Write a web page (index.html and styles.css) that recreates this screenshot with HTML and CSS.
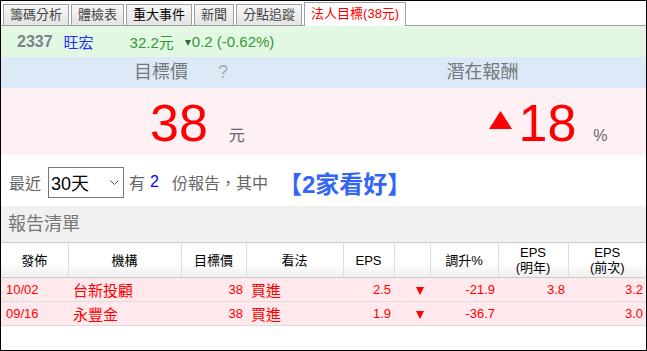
FILE: index.html
```html
<!DOCTYPE html>
<html>
<head>
    <meta charset="utf-8">
    <link rel="stylesheet" href="styles.css">
</head>
<body>
    <div class="frame">
        <div class="tabs">
            <div class="tab">籌碼分析</div>
            <div class="tab">體檢表</div>
            <div class="tab hover">重大事件</div>
            <div class="tab">新聞</div>
            <div class="tab">分點追蹤</div>
            <div class="tab active">法人目標(38元)</div>
        </div>

        <div class="quote">
            <span class="code">2337</span>
            <span class="name">旺宏</span>
            <span class="price">32.2元</span>
            <span class="chg"><svg class="down-sm" width="6" height="6" viewBox="0 0 6 6"><polygon points="0,0 6,0 3,6" fill="#2e6b2e"/></svg>0.2 (-0.62%)</span>
        </div>

        <div class="target-head">
            <div class="half left"><span>目標價</span><span class="help">?</span></div>
            <div class="half right">潛在報酬</div>
        </div>

        <div class="target-body">
            <div class="half left"><span class="big">38</span><span class="unit">元</span></div>
            <div class="half right"><span class="big"><svg class="up" width="23" height="18" viewBox="0 0 23 18"><polygon points="11.5,0 23,18 0,18" fill="#ff0000"/></svg>18</span><span class="unit">%</span></div>
        </div>

        <div class="summary">
            <span>最近</span>
            <div class="select">
                <span>30天</span>
                <svg width="9" height="5" viewBox="0 0 9 5"><polyline points="0.5,0.5 4.5,4.5 8.5,0.5" fill="none" stroke="#555" stroke-width="1"/></svg>
            </div>
            <span class="has">有</span>
            <span class="count">2</span>
            <span class="rest">份報告，其中</span>
            <span class="bull">【2家看好】</span>
        </div>

        <div class="list-title">報告清單</div>

        <table class="reports">
            <colgroup>
                <col style="width:67px">
                <col style="width:113px">
                <col style="width:65px">
                <col style="width:97px">
                <col style="width:51px">
                <col style="width:36px">
                <col style="width:68px">
                <col style="width:70px">
                <col style="width:78px">
            </colgroup>
            <thead>
                <tr>
                    <th>發佈</th>
                    <th>機構</th>
                    <th>目標價</th>
                    <th>看法</th>
                    <th>EPS</th>
                    <th></th>
                    <th>調升%</th>
                    <th>EPS<br>(明年)</th>
                    <th>EPS<br>(前次)</th>
                </tr>
            </thead>
            <tbody>
                <tr>
                    <td class="date">10/02</td>
                    <td class="org">台新投顧</td>
                    <td class="num">38</td>
                    <td class="view">買進</td>
                    <td class="num">2.5</td>
                    <td class="arrow"><svg width="8" height="8" viewBox="0 0 8 8"><polygon points="0,0 8,0 4,8" fill="#ff0000"/></svg></td>
                    <td class="num">-21.9</td>
                    <td class="num">3.8</td>
                    <td class="num">3.2</td>
                </tr>
                <tr>
                    <td class="date">09/16</td>
                    <td class="org">永豐金</td>
                    <td class="num">38</td>
                    <td class="view">買進</td>
                    <td class="num">1.9</td>
                    <td class="arrow"><svg width="8" height="8" viewBox="0 0 8 8"><polygon points="0,0 8,0 4,8" fill="#ff0000"/></svg></td>
                    <td class="num">-36.7</td>
                    <td class="num"></td>
                    <td class="num">3.0</td>
                </tr>
            </tbody>
        </table>
    </div>
</body>
</html>
```

FILE: styles.css
```css
body {
    margin: 0;
    font-family: "Liberation Sans", "Noto Sans CJK TC", sans-serif;
    background: #fff;
}

.frame {
    width: 645px;
    height: 349px;
    border: 1px solid #000;
    overflow: hidden;
}

/* tab strip */
.tabs {
    display: flex;
    align-items: flex-end;
    gap: 2px;
    height: 24px;
    padding-left: 2px;
    border-bottom: 1px solid #a0a0a0;
}

.tab {
    height: 20px;
    line-height: 20px;
    padding: 0 6px;
    border: 1px solid #a0a0a0;
    border-bottom: none;
    background: linear-gradient(#f7f7f7, #e3e3e3);
    font-size: 13px;
    color: #444;
}

.tab.hover { color: #000; }

.tab.active {
    height: 23px;
    line-height: 22px;
    margin-bottom: -1px;
    background: #fff;
    color: #ff0000;
}

/* quote bar */
.quote {
    display: flex;
    align-items: center;
    height: 31px;
    padding-left: 16px;
    background: #e2f8e2;
    font-size: 15px;
}

.code { color: #7a8290; font-weight: bold; font-size: 16px; margin-right: 11px; }
.name { color: #1a2ff0; margin-right: 36px; }
.price { color: #339933; margin-right: 11px; }
.chg { color: #339933; display: flex; align-items: center; }
.down-sm { margin-right: 1px; margin-top: 2px; }

/* target price */
.target-head {
    display: flex;
    height: 31px;
    background: #dceaf8;
    font-size: 18px;
    line-height: 31px;
    color: #777;
}

.half {
    width: 50%;
    box-sizing: border-box;
}

.target-head .left { padding-left: 133px; }
.target-head .right { padding-left: 123px; }
.help { color: #aaa; margin-left: 30px; }

.target-body {
    display: flex;
    height: 67px;
    background: #fff0f4;
}

.target-body .half {
    display: flex;
    align-items: baseline;
    padding-top: 9px;
}

.target-body .left { padding-left: 149px; }
.target-body .right { padding-left: 165px; }

.big {
    font-size: 52px;
    line-height: 52px;
    color: #ff0000;
}

.up {
    vertical-align: 12px;
    margin-right: 7px;
}

.unit {
    font-size: 16px;
    color: #666;
    margin-left: 21px;
}

.target-body .right .unit { margin-left: 17px; }

/* summary line */
.summary {
    display: flex;
    align-items: center;
    box-sizing: border-box;
    height: 51px;
    padding: 3px 0 0 8px;
    font-size: 16px;
    color: #666;
}

.select {
    display: flex;
    align-items: center;
    justify-content: space-between;
    box-sizing: border-box;
    width: 76px;
    height: 31px;
    margin-left: 7px;
    padding: 0 4px 0 2px;
    border: 1px solid #777;
    font-size: 18px;
    color: #000;
}

.has { margin-left: 5px; }
.count { color: #0000ff; margin-left: 5px; }
.rest { margin-left: 13px; }

.bull {
    margin-left: 10px;
    font-size: 24px;
    font-weight: bold;
    color: #3466f6;
}

.list-title {
    height: 36px;
    line-height: 36px;
    padding-left: 7px;
    background: #f0f0f0;
    font-size: 18px;
    color: #777;
}

/* report table */
.reports {
    width: 645px;
    table-layout: fixed;
    border-collapse: collapse;
    border-top: 1px solid #ccc;
}

.reports th {
    height: 34px;
    padding: 0;
    border-left: 1px solid #ddd;
    border-bottom: 1px solid #ccc;
    background: linear-gradient(#fff 55%, #efefef);
    font-size: 13px;
    line-height: 15px;
    font-weight: normal;
    color: #000;
}

.reports th:first-child { border-left: none; }

.reports td {
    height: 23px;
    padding: 0;
    border-bottom: 1px solid #ddd;
    background: #ffe9ec;
    font-size: 13px;
    color: #ff0000;
    white-space: nowrap;
}

.reports td.date { padding-left: 5px; }
.reports td.org { padding-left: 5px; font-size: 15px; }
.reports td.view { padding-left: 5px; font-size: 15px; }
.reports td.num { text-align: right; padding-right: 3px; }
.reports td.arrow { text-align: right; padding-right: 6px; }
.reports td.arrow svg { vertical-align: middle; }
```
